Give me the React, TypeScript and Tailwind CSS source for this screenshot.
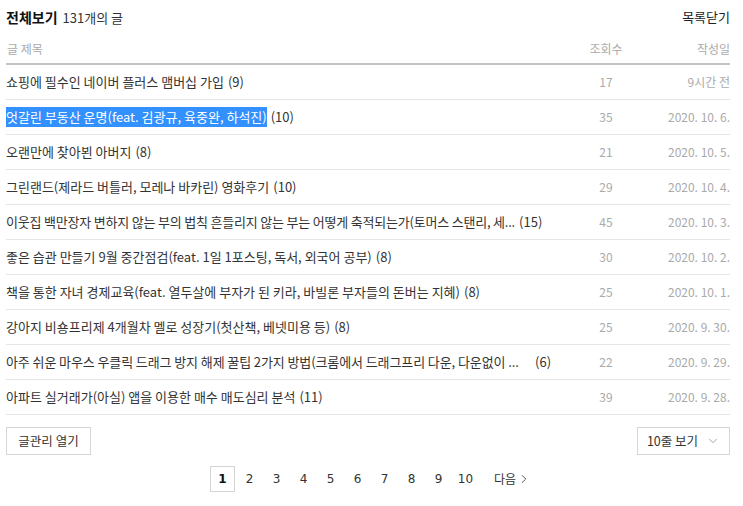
import { ChevronDown, ChevronRight } from 'lucide-react';

type Post = { title: string; comments: number; views: number; date: string; selected?: boolean; cut?: string };

const posts: Post[] = [
  { title: '쇼핑에 필수인 네이버 플러스 맴버십 가입', comments: 9, views: 17, date: '9시간 전' },
  { title: '엇갈린 부동산 운명(feat. 김광규, 육중완, 하석진)', comments: 10, views: 35, date: '2020. 10. 6.', selected: true },
  { title: '오랜만에 찾아뵌 아버지', comments: 8, views: 21, date: '2020. 10. 5.' },
  { title: '그린랜드(제라드 버틀러, 모레나 바카린) 영화후기', comments: 10, views: 29, date: '2020. 10. 4.' },
  { title: '이웃집 백만장자 변하지 않는 부의 법칙 흔들리지 않는 부는 어떻게 축적되는가(토머스 스탠리, 세...', comments: 15, views: 45, date: '2020. 10. 3.', cut: 'shrink-0 tracking-[-0.2px]' },
  { title: '좋은 습관 만들기 9월 중간점검(feat. 1일 1포스팅, 독서, 외국어 공부)', comments: 8, views: 30, date: '2020. 10. 2.' },
  { title: '책을 통한 자녀 경제교육(feat. 열두살에 부자가 된 키라, 바빌론 부자들의 돈버는 지혜)', comments: 8, views: 25, date: '2020. 10. 1.' },
  { title: '강아지 비숑프리제 4개월차 멜로 성장기(첫산책, 베넷미용 등)', comments: 8, views: 25, date: '2020. 9. 30.' },
  { title: '아주 쉬운 마우스 우클릭 드래그 방지 해제 꿀팁 2가지 방법(크롬에서 드래그프리 다운, 다운없이 ...', comments: 6, views: 22, date: '2020. 9. 29.', cut: 'w-[525px] shrink-0 tracking-[-0.1px]' },
  { title: '아파트 실거래가(아실) 앱을 이용한 매수 매도심리 분석', comments: 11, views: 39, date: '2020. 9. 28.' },
];

const pages = [1, 2, 3, 4, 5, 6, 7, 8, 9, 10];

export default function App() {
  return (
    <div className="w-[743px] h-[506px] bg-white overflow-hidden text-[#333] font-['Noto_Sans_CJK_KR','Liberation_Sans',sans-serif]">
      <div className="ml-[6px] w-[724px]">
        {/* top bar */}
        <div className="h-[34px] flex items-center justify-between">
          <div className="text-[13px]">
            <span className="font-bold text-[14px] text-[#111]">전체보기</span>
            <span className="ml-[5px]">131개의 글</span>
          </div>
          <button className="text-[13px] text-[#222]">목록닫기</button>
        </div>

        {/* column header */}
        <div className="h-[31px] flex items-center border-b-2 border-[#c4c4c4] text-[12px] text-[#aaa]">
          <div className="flex-1 pl-[1px]">글 제목</div>
          <div className="w-[60px] text-center">조회수</div>
          <div className="w-[94px] text-right">작성일</div>
        </div>

        {/* rows */}
        {posts.map((p, i) => (
          <div key={i} className="h-[35px] flex items-center border-b border-[#e6e6e6] text-[13px]">
            <div className="flex-1 min-w-0 flex items-center whitespace-nowrap">
              <span className={p.selected ? 'bg-[#3390ff] text-white' : p.cut || ''}>{p.title}</span>
              <span className="ml-[4px] shrink-0">({p.comments})</span>
            </div>
            <div className="w-[60px] text-center text-[#aaa] text-[12px]">{p.views}</div>
            <div className="w-[94px] text-right text-[#aaa] text-[12px]">{p.date}</div>
          </div>
        ))}

        {/* buttons */}
        <div className="mt-[12px] flex justify-between">
          <button className="h-[28px] w-[85px] border border-[#d6d6d6] text-[12.5px] text-[#333]">글관리 열기</button>
          <button className="h-[28px] w-[93px] border border-[#d6d6d6] text-[12.5px] text-[#333] flex items-center justify-center gap-[8px]">
            10줄 보기
            <ChevronDown size={14} strokeWidth={1.3} className="text-[#888]" />
          </button>
        </div>

        {/* pagination */}
        <div className="mt-[11px] flex items-center pl-[204px] text-[12px] font-['DejaVu_Sans',sans-serif]">
          {pages.map((n) => (
            <span
              key={n}
              className={
                n === 1
                  ? 'w-[25px] h-[26px] mr-[2px] border border-[#d4d4d4] flex items-center justify-center font-bold text-[#111]'
                  : 'w-[25px] h-[26px] mr-[2px] flex items-center justify-center text-[#333]'
              }
            >
              {n}
            </span>
          ))}
          <span className="ml-[14px] flex items-center text-[12px] text-[#333] font-['Noto_Sans_CJK_KR',sans-serif]">
            다음
            <ChevronRight size={14} strokeWidth={1.4} className="ml-[1px]" />
          </span>
        </div>
      </div>
    </div>
  );
}
